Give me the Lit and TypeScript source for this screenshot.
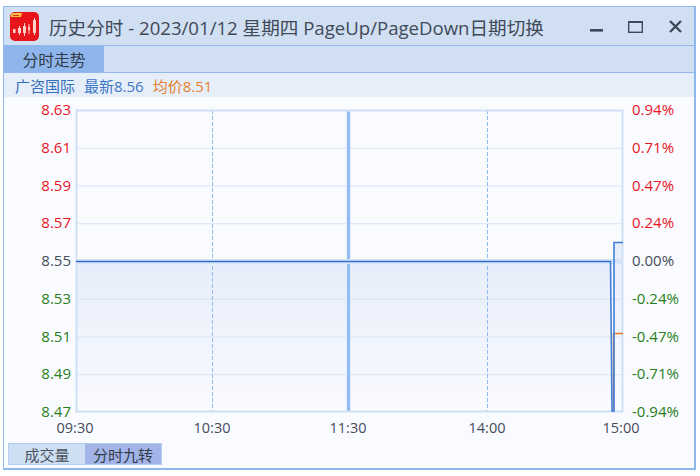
import { LitElement, html, css, svg } from "lit";
import { customElement } from "lit/decorators.js";

const W = 690, X0 = 72, X1 = 619, Y0 = 13, Y1 = 315;
const left = ["8.63","8.61","8.59","8.57","8.55","8.53","8.51","8.49","8.47"];
const right = ["0.94%","0.71%","0.47%","0.24%","0.00%","-0.24%","-0.47%","-0.71%","-0.94%"];
const times = [["09:30", 71], ["10:30", 208], ["11:30", 344], ["14:00", 483], ["15:00", 617]] as const;
const yAt = (i: number) => Y0 + ((Y1 - Y0) * i) / 8;
const tone = (i: number) => (i < 4 ? "up" : i > 4 ? "down" : "flat");

@customElement("app-root")
export class AppRoot extends LitElement {
  static styles = css`
    :host { display: block; width: 700px; height: 476px; background: #fff; box-sizing: border-box; padding: 6px 4px 6px 3px;
      font-family: "Open Sans", "Noto Sans CJK SC", sans-serif; }
    .win { height: 100%; box-sizing: border-box; border: 1px solid #8fb8ec; border-width: 1px 2px 2px 1px; display: flex; flex-direction: column; background: #fafbff; }
    .title { height: 38px; flex: none; display: flex; align-items: center; background: #d0dff2; border-bottom: 1px solid #90b8ec; padding-left: 6px; }
    .logo { width: 29px; height: 29px; flex: none; margin: 1px 10px 0 0; }
    .title-text { font-size: 18.6px; color: #414a59; flex: 1; white-space: nowrap; }
    .ctrl { display: flex; align-items: flex-start; margin-right: 12px; padding-top: 1px; }
    .ctrl svg { display: block; }
    .ctrl .max { margin: 0 26px 0 25px; }
    .tabs { height: 26px; flex: none; display: flex; background: #d0dff2; border-bottom: 1px solid #90b8ec; }
    .tab { width: 100px; background: #8fb6ec; display: flex; align-items: center; justify-content: center; font-size: 15.8px; color: #333b49; }
    .info { height: 24px; flex: none; background: #e6eefa; display: flex; align-items: center; padding-left: 11px; font-size: 15px; }
    .name { color: #3470ba; margin-right: 9px; }
    .last { color: #3f78c6; margin-right: 9px; }
    .avg { color: #e67f2c; }
    .chart { flex: 1; min-height: 0; position: relative; }
    svg.plot { display: block; }
    svg.plot text { font-size: 15px; font-family: "Open Sans", sans-serif; }
    svg.plot text.time { font-size: 14.5px; fill: #454d5b; }
    .up { fill: #e8161f; } .down { fill: #27801a; } .flat { fill: #454d5b; }
    .foot { position: absolute; left: 4px; bottom: 3px; display: flex; border: 1px solid #b4cdf0; }
    .foot span { width: 76px; height: 20px; display: flex; align-items: center; justify-content: center; font-size: 15px; color: #4a5260; background: #cfdff3; }
    .foot span.on { background: #a2b4e8; color: #333b49; }
  `;

  plot() {
    const mid = yAt(4);
    return html`<svg class="plot" width=${W} height="372" viewBox="0 0 ${W} 372">
      <defs><linearGradient id="fill" x1="0" y1="0" x2="0" y2="1">
        <stop offset="0" stop-color="#e6edfa"/><stop offset="1" stop-color="#fafbff"/>
      </linearGradient></defs>
      <rect x=${X0} y=${mid} width=${606 - X0} height=${Y1 - mid} fill="url(#fill)"/>
      <rect x="610" y="145" width=${X1 - 610} height=${Y1 - 145} fill="url(#fill)"/>
      ${left.map((_, i) => i > 0 && i < 8 && i !== 4 ? svg`<line x1=${X0} x2=${X1} y1=${yAt(i) + 0.5} y2=${yAt(i) + 0.5} stroke="#d6e4f6"/>` : "")}
      <line x1="208.5" x2="208.5" y1=${Y0} y2=${Y1} stroke="#8fbcf0" stroke-dasharray="4 2"/>
      <line x1="483.5" x2="483.5" y1=${Y0} y2=${Y1} stroke="#8fbcf0" stroke-dasharray="4 2"/>
      <rect x="342" y=${Y0} width="5" height=${Y1 - Y0} fill="#e2ecfb"/>
      <rect x="343" y=${Y0} width="3" height=${Y1 - Y0} fill="#94bdf3"/>
      <rect x=${X0 + 0.5} y=${Y0 + 0.5} width=${X1 - X0 - 1} height=${Y1 - Y0 - 1} fill="none" stroke="#cfe0f6" stroke-width="2"/>
      <rect x=${X0} y=${mid - 2} width=${X1 - X0} height="5" fill="#d6e4f8"/>
      <polyline points="609.5,${Y1 - 1} 609.5,236.5 ${X1},236.5" fill="none" stroke="#e8762a" stroke-width="1.5"/>
      <polyline points="${X0},${mid + 0.5} 606.5,${mid + 0.5} 608,${Y1 - 1} 610,${Y1 - 1} 610,145.5 ${X1},145.5" fill="none" stroke="#3f7fd8" stroke-width="1.6"/>
      <polyline points="${X0},${mid + 0.5} 606,${mid + 0.5}" fill="none" stroke="#2f6cc8" stroke-width="1"/>
      ${left.map((t, i) => svg`<text x="67" y=${yAt(i) + 5} text-anchor="end" class=${tone(i)}>${t}</text>`)}
      ${right.map((t, i) => svg`<text x="628" y=${yAt(i) + 5} class=${tone(i)}>${t}</text>`)}
      ${times.map(([t, x]) => svg`<text x=${x} y="336" text-anchor="middle" class="time">${t}</text>`)}
    </svg>`;
  }

  render() {
    return html`<div class="win">
      <div class="title">
        <svg class="logo" viewBox="0 0 29 29">
          <rect width="29" height="29" rx="5" fill="#e8141c"/>
          <path d="M1 4a3 3 0 0 1 3-3h8l-1 4H1z" fill="#f7c23c"/>
          <path d="M3 3.5h6" stroke="#d8301c" stroke-width="1"/>
          <g fill="#ffd4c8">
            <rect x="3" y="17" width="2.5" height="4"/><rect x="8" y="16" width="3" height="5"/>
            <rect x="13" y="14" width="3" height="7"/><rect x="18" y="15" width="2" height="3"/>
            <rect x="23" y="8" width="3" height="13"/>
            <rect x="9" y="14" width="1" height="9"/><rect x="14" y="11" width="1" height="13"/>
            <rect x="18.5" y="12" width="1" height="10"/><rect x="24" y="6" width="1" height="17"/>
          </g>
        </svg>
        <div class="title-text">历史分时 - 2023/01/12 星期四 PageUp/PageDown日期切换</div>
        <div class="ctrl">
          <svg width="13" height="13" viewBox="0 0 13 13"><rect y="9" width="13" height="2.6" fill="#3e4a5c"/></svg>
          <svg class="max" width="15" height="13" viewBox="0 0 15 13"><rect x="0.7" y="1.7" width="13.6" height="10.6" fill="none" stroke="#3e4a5c" stroke-width="1.4"/><rect y="1" width="15" height="2" fill="#3e4a5c"/></svg>
          <svg width="13" height="13" viewBox="0 0 13 13"><path d="M1 1l11 11M12 1L1 12" stroke="#3e4a5c" stroke-width="2.4" fill="none"/></svg>
        </div>
      </div>
      <div class="tabs"><div class="tab">分时走势</div></div>
      <div class="info"><span class="name">广咨国际</span><span class="last">最新8.56</span><span class="avg">均价8.51</span></div>
      <div class="chart">
        ${this.plot()}
        <div class="foot"><span>成交量</span><span class="on">分时九转</span></div>
      </div>
    </div>`;
  }
}
